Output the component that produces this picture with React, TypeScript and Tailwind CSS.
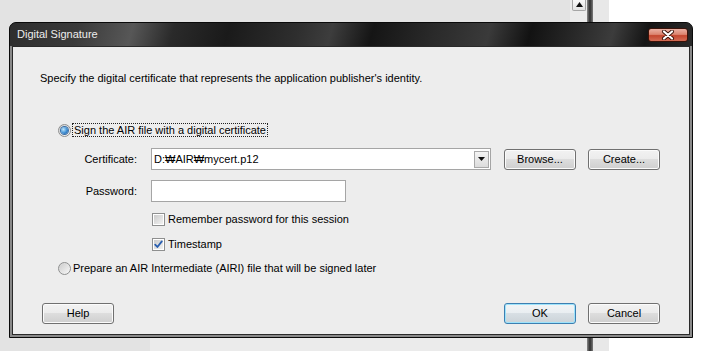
import React from "react";

function Button({ label, primary }: { label: string; primary?: boolean }) {
  return (
    <div
      className={
        "flex h-[21px] w-[72px] items-center justify-center rounded-[3px] border text-[11px] text-black " +
        (primary
          ? "border-[#3c7fb1] bg-[linear-gradient(#f1f4f6_0%,#e9eef1_50%,#d8dfe4_50%,#cbd3d8_100%)] shadow-[inset_0_0_0_1px_#9ee3fb]"
          : "border-[#707070] bg-[linear-gradient(#f2f2f2_0%,#ebebeb_50%,#dddddd_50%,#cfcfcf_100%)] shadow-[inset_0_0_0_1px_#fbfbfb]")
      }
    >
      {label}
    </div>
  );
}

function Radio({ checked }: { checked?: boolean }) {
  return (
    <div className="flex h-[13px] w-[13px] items-center justify-center rounded-full border border-[#8e8f8f] bg-[linear-gradient(135deg,#d2d2d2,#f7f7f7)]">
      {checked ? (
        <div className="h-[7px] w-[7px] rounded-full bg-[radial-gradient(circle_at_35%_35%,#bfe6fb_0%,#3d8ed4_55%,#1a4f92_100%)] shadow-[0_0_0_1px_#3a6ea5]" />
      ) : (
        <div className="h-[9px] w-[9px] rounded-full bg-[linear-gradient(135deg,#cfcfcf,#f4f4f4)]" />
      )}
    </div>
  );
}

function Checkbox({ checked }: { checked?: boolean }) {
  return (
    <div className="flex h-[13px] w-[13px] items-center justify-center border border-[#8e8f8f] bg-white">
      <div className="flex h-[9px] w-[9px] items-center justify-center bg-[linear-gradient(135deg,#cbcbcb,#f2f2f2)]">
        {checked && (
          <svg width="9" height="9" viewBox="0 0 9 9">
            <path d="M1.2 4.6 L3.4 7 L7.8 1.4" fill="none" stroke="#2a5fb0" strokeWidth="1.8" strokeLinecap="round" strokeLinejoin="round" />
          </svg>
        )}
      </div>
    </div>
  );
}

export default function App() {
  return (
    <div className="relative h-[351px] w-[706px] overflow-hidden bg-[#e3e3e3] [font-family:'Liberation_Sans',Arial,sans-serif]">
      {/* desktop behind the dialog */}
      <div className="flex h-full w-full">
        <div className="flex w-[570px] flex-col">
          <div className="flex-1" />
          <div className="flex h-[14px]">
            <div className="w-[150px]" />
            <div className="flex-1 bg-[#ebebeb]" />
          </div>
        </div>
        <div className="flex w-[17px] flex-col bg-[#ebebeb] pl-[2px] pr-[1px]">
          <div className="flex h-[11px] items-start justify-center rounded-b-[2px] border border-t-0 border-[#a6a6a6] bg-[linear-gradient(#fafafa,#e3e3e3)]">
            <svg width="7" height="5" viewBox="0 0 7 5" className="mt-[2px]">
              <path d="M0 5 L3.5 0 L7 5 Z" fill="#111" />
            </svg>
          </div>
        </div>
        <div className="w-[6px] bg-[linear-gradient(90deg,#8a8a8a,#3c3c3c_40%,#3c3c3c_60%,#7a7a7a)]" />
        <div className="w-[16px] bg-[#e8e8e8]" />
        <div className="flex-1 bg-white" />
      </div>

      {/* dialog window */}
      <div className="absolute left-[9px] top-[22px] flex h-[316px] w-[684px] flex-col overflow-hidden rounded-t-[7px] border border-[#0a0a0a] bg-[#1c1c1c]">
        <div className="flex h-[23px] items-center justify-between bg-[linear-gradient(105deg,#2e2e2e_0%,#3a3a3a_10%,#575757_18%,#2a2a2a_24%,#1a1a1a_32%,#2e2e2e_42%,#3d3d3d_47%,#151515_53%,#2a2a2a_62%,#3a3a3a_70%,#121212_76%,#2a2a2a_83%,#3c3c3c_88%,#151515_93%,#2a2a2a_100%)] pl-[7px] pr-[4px]">
          <span className="text-[11px] text-[#ececec]">Digital Signature</span>
          <div className="flex h-[14px] w-[40px] items-center justify-center rounded-[3px] border border-[#3a1208] bg-[linear-gradient(#eab0a3_0%,#dc8570_45%,#c4472f_55%,#d36c55_100%)]">
            <svg width="14" height="10" viewBox="0 0 14 10">
              <path d="M3 1.5 L11 8.5 M11 1.5 L3 8.5" stroke="#3a1208" strokeWidth="4" strokeLinecap="round" />
              <path d="M3 1.5 L11 8.5 M11 1.5 L3 8.5" stroke="#ffffff" strokeWidth="2.2" strokeLinecap="round" />
            </svg>
          </div>
        </div>
        <div className="flex flex-1 flex-col bg-[#8a8a8a] px-[2px] pb-[2px]">
          <div className="flex flex-1 flex-col border border-[#2a2a2a] bg-[#ededed] text-[11px] text-black">
            <div className="ml-[27px] mt-[25px] h-[13px] leading-[13px]">
              Specify the digital certificate that represents the application publisher's identity.
            </div>

            <div className="ml-[45px] mt-[38px] flex h-[14px] items-center">
              <Radio checked />
              <span className="ml-[1px] border border-dotted border-[#222] px-[1px] leading-[12px]">
                Sign the AIR file with a digital certificate
              </span>
            </div>

            <div className="mt-[11px] flex h-[22px] items-center">
              <div className="w-[124px] text-right">Certificate:</div>
              <div className="ml-[14px] flex h-[22px] w-[340px] items-center justify-between border border-[#a5a5a5] bg-white pl-[2px] pr-[1px]">
                <span>D:₩AIR₩mycert.p12</span>
                <div className="flex h-[17px] w-[15px] items-center justify-center border border-[#a9a9a9] bg-[linear-gradient(#f4f4f4,#dcdcdc)]">
                  <svg width="7" height="4" viewBox="0 0 7 4">
                    <path d="M0 0 L7 0 L3.5 4 Z" fill="#111" />
                  </svg>
                </div>
              </div>
              <div className="ml-[13px]">
                <Button label="Browse..." />
              </div>
              <div className="ml-[12px]">
                <Button label="Create..." />
              </div>
            </div>

            <div className="mt-[10px] flex h-[22px] items-center">
              <div className="w-[124px] text-right">Password:</div>
              <div className="ml-[14px] h-[22px] w-[195px] border border-[#a5a5a5] bg-white" />
            </div>

            <div className="ml-[139px] mt-[11px] flex h-[13px] items-center">
              <Checkbox />
              <span className="ml-[3px]">Remember password for this session</span>
            </div>

            <div className="ml-[139px] mt-[12px] flex h-[13px] items-center">
              <Checkbox checked />
              <span className="ml-[3px]">Timestamp</span>
            </div>

            <div className="ml-[45px] mt-[11px] flex h-[13px] items-center">
              <Radio />
              <span className="ml-[2px]">Prepare an AIR Intermediate (AIRI) file that will be signed later</span>
            </div>

            <div className="mt-[28px] flex items-center">
              <div className="ml-[29px]">
                <Button label="Help" />
              </div>
              <div className="ml-[390px]">
                <Button label="OK" primary />
              </div>
              <div className="ml-[12px]">
                <Button label="Cancel" />
              </div>
            </div>
          </div>
        </div>
      </div>
    </div>
  );
}
